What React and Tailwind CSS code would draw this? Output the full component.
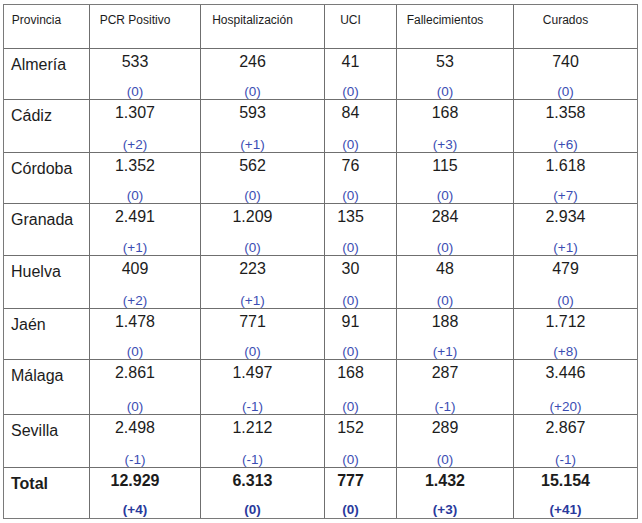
import React from "react";

const rows = [
  { name: "Almería", vals: [["533", "(0)"], ["246", "(0)"], ["41", "(0)"], ["53", "(0)"], ["740", "(0)"]] },
  { name: "Cádiz", vals: [["1.307", "(+2)"], ["593", "(+1)"], ["84", "(0)"], ["168", "(+3)"], ["1.358", "(+6)"]] },
  { name: "Córdoba", vals: [["1.352", "(0)"], ["562", "(0)"], ["76", "(0)"], ["115", "(0)"], ["1.618", "(+7)"]] },
  { name: "Granada", vals: [["2.491", "(+1)"], ["1.209", "(0)"], ["135", "(0)"], ["284", "(0)"], ["2.934", "(+1)"]] },
  { name: "Huelva", vals: [["409", "(+2)"], ["223", "(+1)"], ["30", "(0)"], ["48", "(0)"], ["479", "(0)"]] },
  { name: "Jaén", vals: [["1.478", "(0)"], ["771", "(0)"], ["91", "(0)"], ["188", "(+1)"], ["1.712", "(+8)"]] },
  { name: "Málaga", vals: [["2.861", "(0)"], ["1.497", "(-1)"], ["168", "(0)"], ["287", "(-1)"], ["3.446", "(+20)"]] },
  { name: "Sevilla", vals: [["2.498", "(-1)"], ["1.212", "(-1)"], ["152", "(0)"], ["289", "(0)"], ["2.867", "(-1)"]] },
];

const total = [["12.929", "(+4)"], ["6.313", "(0)"], ["777", "(0)"], ["1.432", "(+3)"], ["15.154", "(+41)"]];

const headers = ["PCR Positivo", "Hospitalización", "UCI", "Fallecimientos", "Curados"];

export default function App() {
  return (
    <div className="w-[642px] h-[523px] bg-white pt-[4px] pl-[3px] font-['Liberation_Sans',Arial,sans-serif] text-[#1c1c1c]">
      <div className="grid w-[635px] grid-cols-[85px_110px_123px_71px_116px_123px] grid-rows-[43px_50px_52px_50px_51px_52px_50px_54px_52px_50px] gap-px bg-[#6f6f6f] border border-[#7a7a7a]">
        <div className="bg-white text-center pr-[20px] pt-[8px] text-[12px] leading-[14px]">Provincia</div>
        {headers.map((h) => (
          <div key={h} className="bg-white text-center pr-[20px] pt-[8px] text-[12px] leading-[14px]">
            {h}
          </div>
        ))}

        {rows.map((r) => (
          <React.Fragment key={r.name}>
            <div className="bg-white pl-[7px] pt-[7px] text-[16px] leading-[18px]">{r.name}</div>
            {r.vals.map(([v, d], i) => (
              <div key={i} className="bg-white flex flex-col justify-between items-center pr-[20px] pt-[4px]">
                <span className="text-[16px] leading-[18px]">{v}</span>
                <span className="text-[13.5px] leading-[14px] text-[#3b4db3]">{d}</span>
              </div>
            ))}
          </React.Fragment>
        ))}

        <div className="bg-white pl-[7px] pt-[7px] text-[16px] leading-[18px] font-bold">Total</div>
        {total.map(([v, d], i) => (
          <div key={i} className="bg-white flex flex-col justify-between items-center pr-[20px] pt-[4px] pb-[1px] font-bold">
            <span className="text-[16px] leading-[18px]">{v}</span>
            <span className="text-[13.5px] leading-[14px] text-[#2a3a9c]">{d}</span>
          </div>
        ))}
      </div>
    </div>
  );
}
